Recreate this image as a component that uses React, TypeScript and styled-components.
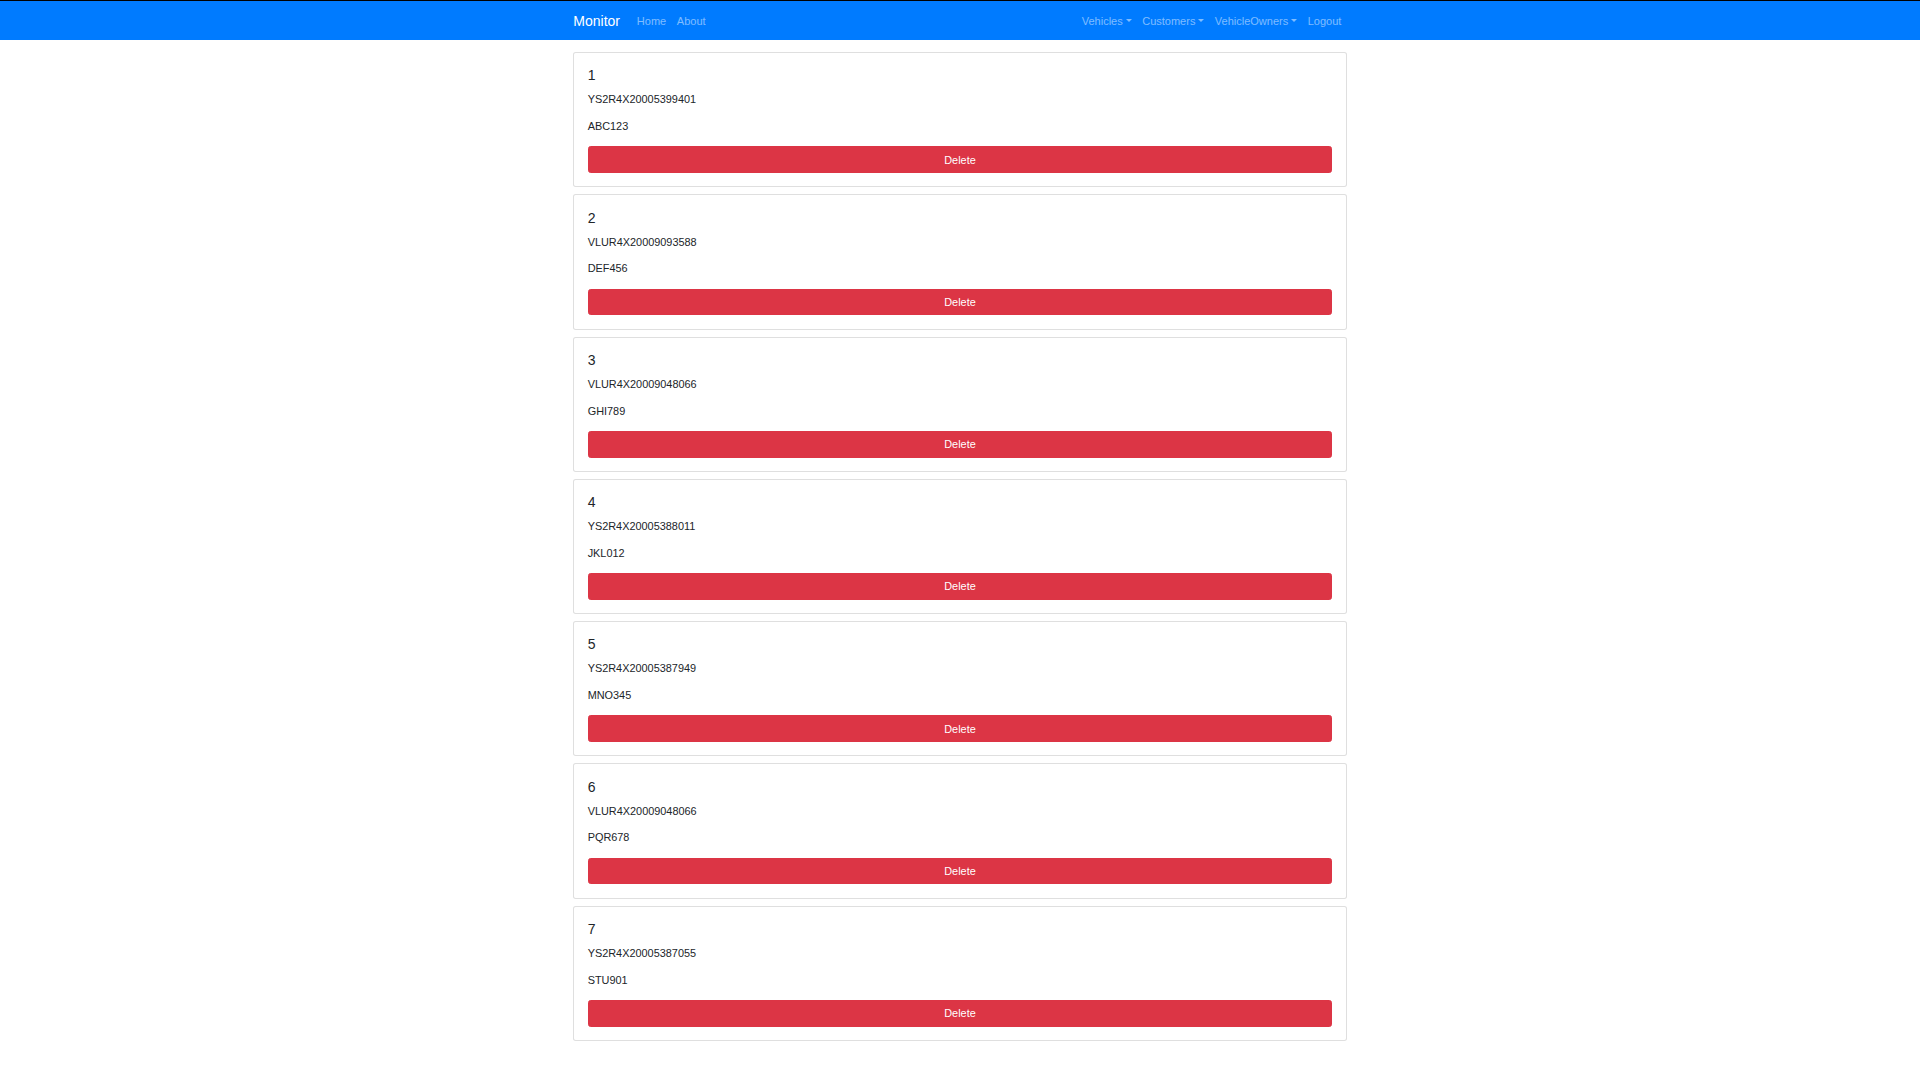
import React from "react";
import styled, { createGlobalStyle } from "styled-components";

const GlobalStyle = createGlobalStyle`
  html, body {
    margin: 0;
    padding: 0;
    background: #ffffff;
  }
  body {
    font-family: "Liberation Sans", Arial, Helvetica, sans-serif;
    font-size: 10.9px;
    line-height: 1.5;
    color: #212529;
  }
  * { box-sizing: border-box; }
`;

const Navbar = styled.nav`
  background: #007bff;
  border-top: 1px solid #000000;
  height: 40px;
`;

const NavInner = styled.div`
  width: 773.33px;
  height: 39px;
  margin: 0 auto;
  display: flex;
  align-items: center;
`;

const Brand = styled.a`
  color: #ffffff;
  font-size: 14px;
  line-height: 20px;
  margin-right: 11.5px;
  text-decoration: none;
  white-space: nowrap;
`;

const NavGroup = styled.div<{ $right?: boolean }>`
  display: flex;
  align-items: center;
  margin-left: ${(p) => (p.$right ? "auto" : "0")};
`;

const NavLink = styled.a<{ $dropdown?: boolean }>`
  color: rgba(255, 255, 255, 0.5);
  font-size: 11px;
  line-height: 16px;
  padding: 0 5.33px;
  text-decoration: none;
  white-space: nowrap;
  &::after {
    display: ${(p) => (p.$dropdown ? "inline-block" : "none")};
    content: "";
    margin-left: 0.255em;
    vertical-align: 0.255em;
    border-top: 0.3em solid;
    border-right: 0.3em solid transparent;
    border-left: 0.3em solid transparent;
    border-bottom: 0;
  }
`;

const Main = styled.main`
  width: 773.33px;
  margin: 12px auto 0;
`;

const Card = styled.div`
  display: flex;
  flex-direction: column;
  border: 1px solid rgba(0, 0, 0, 0.125);
  border-radius: 2.67px;
  padding: 13.33px;
  margin-bottom: 7px;
  background: #ffffff;
`;

const Title = styled.h5`
  font-size: 14px;
  font-weight: 400;
  line-height: 19px;
  margin: 0 0 6px;
`;

const Text = styled.p`
  font-size: 10.9px;
  line-height: 16px;
  margin: 0 0 10.67px;
`;

const DeleteButton = styled.button`
  display: block;
  width: 100%;
  height: 26.67px;
  margin-top: 1.67px;
  padding: 0;
  background: #dc3545;
  border: 1px solid #dc3545;
  border-radius: 2.67px;
  color: #ffffff;
  font-family: "Liberation Sans", Arial, Helvetica, sans-serif;
  font-size: 10.9px;
  line-height: 16px;
  cursor: pointer;
`;

const vehicles = [
  { id: 1, vin: "YS2R4X20005399401", plate: "ABC123" },
  { id: 2, vin: "VLUR4X20009093588", plate: "DEF456" },
  { id: 3, vin: "VLUR4X20009048066", plate: "GHI789" },
  { id: 4, vin: "YS2R4X20005388011", plate: "JKL012" },
  { id: 5, vin: "YS2R4X20005387949", plate: "MNO345" },
  { id: 6, vin: "VLUR4X20009048066", plate: "PQR678" },
  { id: 7, vin: "YS2R4X20005387055", plate: "STU901" },
];

export default function App() {
  return (
    <>
      <GlobalStyle />
      <Navbar>
        <NavInner>
          <Brand href="#">Monitor</Brand>
          <NavGroup>
            <NavLink href="#">Home</NavLink>
            <NavLink href="#">About</NavLink>
          </NavGroup>
          <NavGroup $right>
            <NavLink href="#" $dropdown>Vehicles</NavLink>
            <NavLink href="#" $dropdown>Customers</NavLink>
            <NavLink href="#" $dropdown>VehicleOwners</NavLink>
            <NavLink href="#">Logout</NavLink>
          </NavGroup>
        </NavInner>
      </Navbar>
      <Main>
        {vehicles.map((v) => (
          <Card key={v.id}>
            <Title>{v.id}</Title>
            <Text>{v.vin}</Text>
            <Text>{v.plate}</Text>
            <DeleteButton>Delete</DeleteButton>
          </Card>
        ))}
      </Main>
    </>
  );
}
